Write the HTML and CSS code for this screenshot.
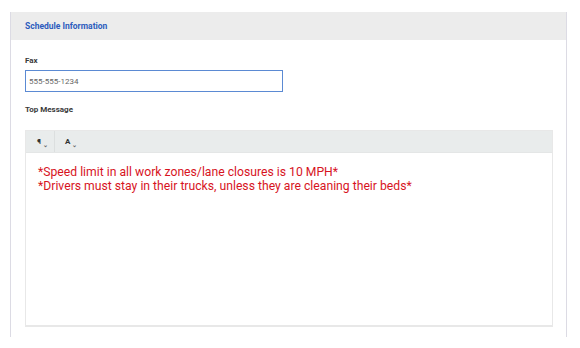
FILE: index.html
```html
<!DOCTYPE html>
<html lang="en">
<head>
  <meta charset="UTF-8" />
  <meta name="viewport" content="width=device-width, initial-scale=1.0" />
  <title>Schedule Information</title>
  <link rel="stylesheet" href="styles.css">
</head>
<body>
  <div class="panel">
    <div class="panel-header">
      <h2>Schedule Information</h2>
    </div>

    <div class="panel-body">
      <label class="field-label fax-label" for="fax">Fax</label>
      <input type="text" id="fax" class="text-input" value="555-555-1234" />

      <div class="field-label msg-label">Top Message</div>
      <div class="editor">
        <div class="toolbar">
          <span class="tool">¶<span class="caret">⌄</span></span>
          <span class="tool">A<span class="caret">⌄</span></span>
        </div>
        <div class="editor-content">
          <p>*Speed limit in all work zones/lane closures is 10 MPH*</p>
          <p>*Drivers must stay in their trucks, unless they are cleaning their beds*</p>
        </div>
      </div>
    </div>
  </div>
</body>
</html>
```

FILE: styles.css
```css
body { margin: 0; background: #fff; font-family: Roboto, "Liberation Sans", Arial, sans-serif; color: #333; }

.panel { margin: 12px 13px 0 10px; border-left: 1px solid #dcdbe4; border-right: 1px solid #dcdbe4; height: 325px; box-sizing: border-box; }
.panel-header { background: #ececec; height: 28px; display: flex; align-items: center; padding-left: 14px; }
.panel-header h2 { margin: 0; font-size: 8.5px; font-weight: 700; color: #2c5cbd; }

.panel-body { padding: 0 13px 0 14px; }
.field-label { display: block; font-size: 8px; font-weight: 700; color: #3a3a3a; line-height: 10px; }
.fax-label { padding-top: 16px; padding-bottom: 4px; }
.msg-label { padding-top: 13px; padding-bottom: 6px; }
.text-input { display: block; width: 258px; height: 22px; box-sizing: border-box; border: 1px solid #5b8ad3; padding: 0 3px; font-family: inherit; font-size: 8px; color: #666; outline: none; }

.editor { margin-top: 9px; border: 1px solid #e8e8e8; border-bottom-width: 2px; height: 197px; box-sizing: border-box; }
.toolbar { display: flex; background: #e9ecec; height: 21px; border-bottom: 1px solid #e4e6e6; }
.tool { display: flex; align-items: center; padding: 0 6px 0 11px; font-size: 8px; font-weight: 700; color: #333; border-right: 1px solid #dcdfdf; }
.tool + .tool { padding-left: 10px; }
.tool:last-child { border-right: none; }
.caret { font-size: 6px; margin-left: 2px; margin-top: 5px; color: #666; }

.editor-content { padding: 13px 12px; }
.editor-content p { margin: 0; font-size: 12.2px; line-height: 13.5px; color: #d7141e; }
```
